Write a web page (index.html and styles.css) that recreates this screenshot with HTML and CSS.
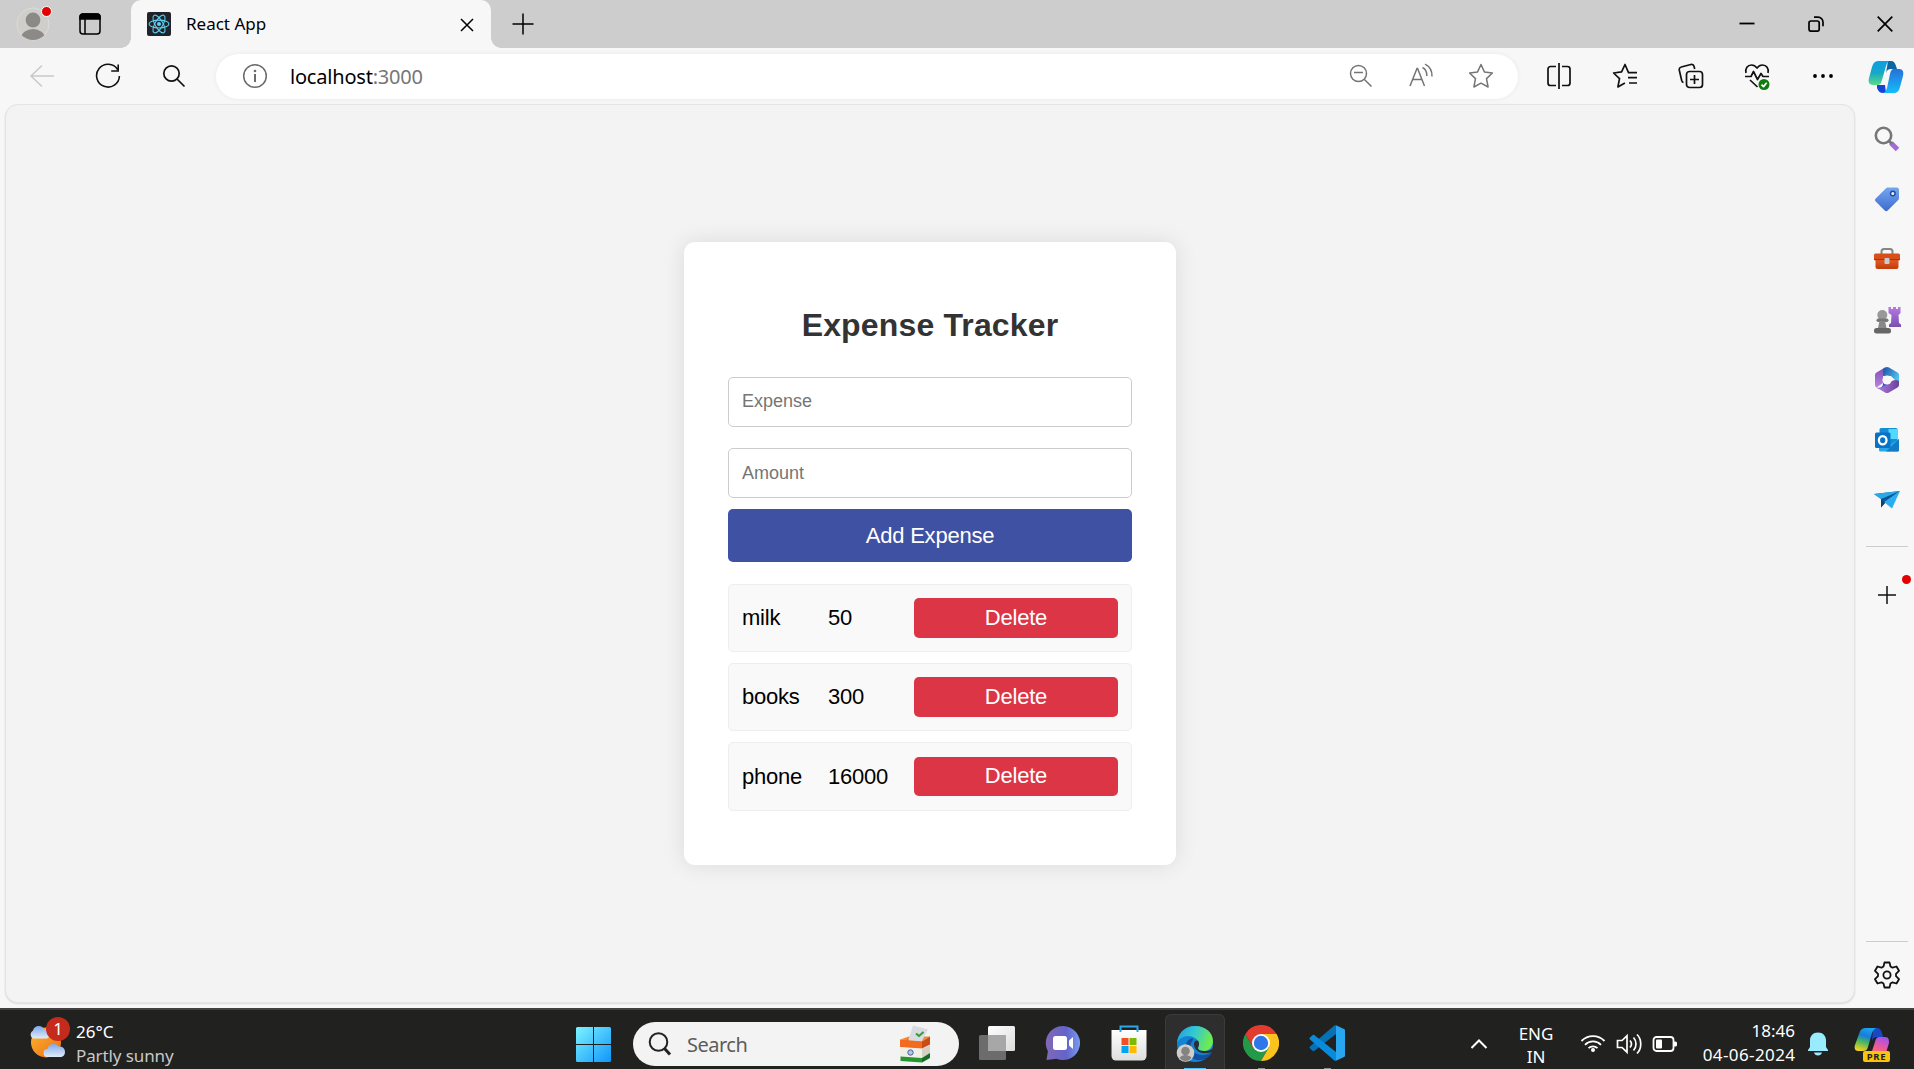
FILE: index.html
```html
<!DOCTYPE html>
<html lang="en">
<head>
<meta charset="utf-8">
<title>React App</title>
<link rel="stylesheet" href="styles.css">
</head>
<body>
<div class="desktop">
  <header class="tabstrip">
    <div class="profile">
      <svg width="34" height="34" viewBox="0 0 34 34"><defs><clipPath id="av"><circle cx="17" cy="17" r="16"/></clipPath></defs><circle cx="17" cy="17" r="16" fill="#cfcecb" stroke="#dddcd9"/><g clip-path="url(#av)" fill="#8c8a87"><circle cx="17" cy="13" r="7.4"/><ellipse cx="17" cy="31" rx="12" ry="9"/></g></svg>
      <span class="dot profile-dot"></span>
    </div>
    <svg class="workspace" width="22" height="22" viewBox="0 0 22 22" fill="none" stroke="#000" stroke-width="1.5"><rect x="1" y="1" width="20" height="20" rx="3"/><path d="M1 4a3 3 0 0 1 3-3h14a3 3 0 0 1 3 3v2H1z" fill="#000"/><path d="M6 6v15"/></svg>
    <div class="tab">
      <svg width="24" height="24" viewBox="0 0 24 24"><rect width="24" height="24" rx="2" fill="#20232a"/><g fill="none" stroke="#5ed3f3" stroke-width="1.05"><ellipse cx="12" cy="12" rx="10" ry="3.9"/><ellipse cx="12" cy="12" rx="10" ry="3.9" transform="rotate(60 12 12)"/><ellipse cx="12" cy="12" rx="10" ry="3.9" transform="rotate(120 12 12)"/></g><circle cx="12" cy="12" r="2" fill="#5ed3f3"/></svg>
      <span class="tab-title">React App</span>
      <svg class="tab-close" width="14" height="14" viewBox="0 0 14 14" stroke="#000" stroke-width="1.5"><path d="M1 1l12 12M13 1L1 13"/></svg>
    </div>
    <svg class="newtab" width="22" height="22" viewBox="0 0 22 22" stroke="#000" stroke-width="1.5"><path d="M11 .5v21M.5 11h21"/></svg>
    <div class="window-buttons">
      <svg width="16" height="16" viewBox="0 0 16 16" stroke="#000" stroke-width="1.8"><path d="M.5 7.5h15"/></svg>
      <svg width="16" height="16" viewBox="0 0 16 16" fill="none" stroke="#000" stroke-width="1.7"><rect x="1" y="5" width="10.2" height="10.2" rx="2"/><path d="M6 1.2h4a5 5 0 0 1 5 5v4"/></svg>
      <svg width="16" height="16" viewBox="0 0 16 16" stroke="#000" stroke-width="1.7"><path d="M.7.7l14.6 14.6M15.3.7L.7 15.3"/></svg>
    </div>
  </header>

  <nav class="toolbar">
    <div class="cell"><svg width="26" height="26" viewBox="0 0 26 26" fill="none" stroke="#c9c9c9" stroke-width="1.5"><path d="M25 13H2M13 2.5L2 13l11 10.5"/></svg></div>
    <div class="cell"><svg width="26" height="26" viewBox="0 0 26 26" fill="none" stroke="#111" stroke-width="1.6"><path d="M22.600 6.500A11.400 11.400 0 1 0 24.400 13M23.200 1.500V8h-7"/></svg></div>
    <div class="cell"><svg width="24" height="24" viewBox="0 0 24 24" fill="none" stroke="#111" stroke-width="1.7"><circle cx="9.5" cy="9.5" r="7.7"/><path d="M15 15l7.5 7.5"/></svg></div>
    <div class="address">
      <svg class="info" width="26" height="26" viewBox="0 0 26 26" fill="none" stroke="#6b6b6b" stroke-width="1.5"><circle cx="13" cy="13" r="11.3"/><path d="M13 11v8" stroke-width="2"/><circle cx="13" cy="8" r="1.3" fill="#6b6b6b" stroke="none"/></svg>
      <span class="url">localhost<span class="port">:3000</span></span>
      <div class="address-icons">
        <svg width="24" height="24" viewBox="0 0 24 24" fill="none" stroke="#757575" stroke-width="1.5"><circle cx="9.5" cy="9.5" r="8"/><path d="M15.2 15.2l7.3 7.3M5 8.500h9"/></svg>
        <svg width="26" height="26" viewBox="0 0 26 26" fill="none" stroke="#757575" stroke-width="1.5"><path d="M2 23L9 5.5h.6L16.5 23M4.6 16.5H14M14.5 4.500c3 1.500 4.500 4.500 4.300 8.500M17 1.200c5 2.500 7.200 6.500 7 12.300"/></svg>
        <svg width="26" height="26" viewBox="0 0 26 26" fill="none" stroke="#757575" stroke-width="1.5" stroke-linejoin="round"><path d="M13 1.500l3.400 7.400 8 1.100-5.900 5.600 1.600 8.400-7.100-3.900-7.100 3.900 1.600-8.400L1.600 10l8-1.100z"/></svg>
      </div>
    </div>
    <div class="tools">
      <div class="cell"><svg width="26" height="26" viewBox="0 0 26 26" fill="none" stroke="#111" stroke-width="1.7"><path d="M13 0v26M10 3.500H4.500A2.500 2.500 0 0 0 2 6v14A2.500 2.500 0 0 0 4.500 22.500H10M16 3.500h5.500A2.500 2.500 0 0 1 24 6v14a2.500 2.500 0 0 1-2.500 2.500H16"/></svg></div>
      <div class="cell"><svg width="26" height="26" viewBox="0 0 26 26" fill="none" stroke="#111" stroke-width="1.700" stroke-linejoin="round"><path d="M25 9.600h-8.500L13 1.500 9.600 8.900l-8 1.100 5.900 5.600-1.600 8.400 7-3.900M16 14.700h9M17 20h8"/></svg></div>
      <div class="cell"><svg width="26" height="26" viewBox="0 0 26 26" fill="none" stroke="#111" stroke-width="1.700"><rect x="8.500" y="8.500" width="16" height="16" rx="3"/><path d="M16.500 12v9M12 16.500h9M5.500 19.500c-1-.3-1.500-1-1.800-2L1.300 7.200c-.3-1.500.5-2.800 2-3.200l9.500-2.500c1.600-.4 2.900.4 3.300 2l.6 2.500"/></svg></div>
      <div class="cell"><svg width="26" height="28" viewBox="0 0 26 28" fill="none" stroke="#111" stroke-width="1.700" stroke-linejoin="round"><path d="M2 11C1 6.500 3.500 3 7.500 3c2.500 0 4.300 1.400 5.500 3 1.200-1.600 3-3 5.500-3 4 0 6.500 3.500 5.500 8M1 14.500h6l2.500-5 4 8 3.500-6 2 3h6M6 18l7.500 7"/><circle cx="20" cy="22.500" r="5.500" fill="#107c10" stroke="none"/><path d="M17.500 22.700l2 1.900 3.200-3.800" stroke="#fff"/></svg></div>
      <div class="cell"><svg width="22" height="6" viewBox="0 0 22 6"><circle cx="3" cy="3" r="1.900"/><circle cx="11" cy="3" r="1.900"/><circle cx="19" cy="3" r="1.900"/></svg></div>
      <div class="cell copilot"><svg width="36" height="34" viewBox="0 0 36 34"><defs><linearGradient id="c1" x1="0" y1="0" x2="0" y2="1"><stop offset="0" stop-color="#0a9fe5"/><stop offset=".5" stop-color="#19a7c7"/><stop offset="1" stop-color="#57dd86"/></linearGradient><linearGradient id="c2" x1="0" y1="0" x2="0" y2="1"><stop offset="0" stop-color="#2870d8"/><stop offset="1" stop-color="#12bdfb"/></linearGradient></defs><path d="M20 1h3c3 0 4 2 5 5l1 3h-6c-3 0-4 1-5 4z" fill="#0c65a3"/><path d="M9 25h8l1 8h-3c-3 0-5-2-6-5z" fill="#1743d6"/><path d="M10 1h12c-2 0-3 2-4 5l-4 14c-1 4-2 5-5 5H5c-4 0-5-3-4-7L4 7c1-4 3-6 6-6z" fill="url(#c1)"/><path d="M26 9h5c4 0 5 3 4 7l-3 11c-1 4-3 6-6 6H14c3 0 4-2 5-5l3-14c1-4 2-5 4-5z" fill="url(#c2)"/></svg></div>
    </div>
  </nav>

  <div class="browser-body">
    <main class="viewport">
      <section class="card">
        <h1>Expense Tracker</h1>
        <input class="field" type="text" placeholder="Expense">
        <input class="field amount" type="text" placeholder="Amount">
        <button class="add">Add Expense</button>
        <ul class="expenses">
          <li><span>milk</span><span>50</span><button class="delete">Delete</button></li>
          <li><span>books</span><span>300</span><button class="delete">Delete</button></li>
          <li><span>phone</span><span>16000</span><button class="delete">Delete</button></li>
        </ul>
      </section>
    </main>
    <aside class="sidebar">
      <div class="side-item"><svg width="26" height="26" viewBox="0 0 26 26"><path d="M17 17l6.500 6.500" stroke="#a46bd8" stroke-width="5"/><path d="M15 15l3 3" stroke="#777" stroke-width="3"/><circle cx="9.500" cy="9.500" r="7.700" fill="#f8f8f8" stroke="#777" stroke-width="2.600"/></svg></div>
      <div class="side-item"><svg width="26" height="26" viewBox="0 0 26 26"><defs><linearGradient id="tg" x1="0" y1="0" x2="0" y2="1"><stop stop-color="#75a7ef"/><stop offset="1" stop-color="#3e6bd0"/></linearGradient></defs><path d="M14 1.500h8.500a2.500 2.500 0 0 1 2.500 2.500v8c0 1-.3 1.600-1 2.300L13.700 24.500c-1 1-2 1-3 0L1.700 15.600c-1-1-1-2 0-3L11.800 2.400c.7-.7 1.200-.9 2.200-.9z" fill="url(#tg)"/><circle cx="18.800" cy="7.500" r="2.300" fill="#e8f0ff" stroke="#254a9f" stroke-width="1.500"/></svg></div>
      <div class="side-item"><svg width="28" height="24" viewBox="0 0 28 24"><defs><linearGradient id="tb" x1="0" y1="0" x2="0" y2="1"><stop stop-color="#e8622c"/><stop offset="1" stop-color="#c13c0a"/></linearGradient></defs><path d="M8.500 8V4.500A2.500 2.500 0 0 1 11 2h6a2.500 2.500 0 0 1 2.500 2.500V8" fill="none" stroke="#858585" stroke-width="2"/><path d="M2.500 11h23v9a2 2 0 0 1-2 2h-19a2 2 0 0 1-2-2z" fill="url(#tb)"/><rect x="1" y="6.500" width="26" height="7" rx="1.500" fill="#d94f18"/><path d="M1 12.500h26" stroke="#a9360c"/><rect x="11.500" y="11" width="5" height="6" rx="1" fill="#c5ccd2"/></svg></div>
      <div class="side-item"><svg width="28" height="28" viewBox="0 0 28 28"><defs><linearGradient id="rk" x1="0" y1="0" x2="0" y2="1"><stop stop-color="#b77ae4"/><stop offset="1" stop-color="#7a4faf"/></linearGradient></defs><path d="M15.500 1h2.500v2h2V1h3v2h2V1h2.500v6l-2 2 .5 8 2 1.500V21h-12v-2.500L18 17l.5-8-3-2z" fill="url(#rk)"/><circle cx="9.300" cy="9" r="5" fill="#999"/><rect x="3.500" y="12.500" width="12" height="3.500" rx="1.700" fill="#777"/><path d="M6.500 15h5.500l1.500 7H5z" fill="#888"/><rect x="1" y="22" width="17" height="5.500" rx="2.500" fill="#666"/></svg></div>
      <div class="side-item"><svg width="26" height="28" viewBox="0 0 26 28"><defs><linearGradient id="m1" x1="0" y1="0" x2="0" y2="1"><stop stop-color="#7b4fb8"/><stop offset="1" stop-color="#bb83df"/></linearGradient><linearGradient id="m2" x1="0" y1="0" x2="1" y2=".6"><stop stop-color="#1d4da5"/><stop offset="1" stop-color="#52c5ef"/></linearGradient><linearGradient id="m3" x1="0" y1="0" x2="1" y2="0"><stop stop-color="#b57ddd"/><stop offset="1" stop-color="#69429c"/></linearGradient></defs><path d="M11 1.500L2.500 6.500A3 3 0 0 0 1 9v10a3 3 0 0 0 1.500 2.500L9 17V10z" fill="url(#m1)"/><path d="M11 1.500a4 4 0 0 1 4 0l8.500 5A3 3 0 0 1 25 9v9L17 10 9 10V5c0-2 .5-2.700 2-3.500z" fill="url(#m2)"/><path d="M9 16v2c0 3-3 5-6.500 3.500L4 22.500c3 1 6 0 8-1.500l3-2z" fill="#385ac9"/><path d="M25 15v4a3 3 0 0 1-1.500 2.500l-8.500 5a4 4 0 0 1-4 0l-8.500-5C7 22 9 21 11 19.500l7-4.500c2-1.200 5-1.500 7 0z" fill="url(#m3)"/><circle cx="13" cy="14" r="4.600" fill="#f8f8f8"/></svg></div>
      <div class="side-item"><svg width="26" height="26" viewBox="0 0 26 26"><rect x="5.500" y="1" width="18" height="20" rx="1.500" fill="#168bd6"/><path d="M14.500 2H23v10h-8.500z" fill="#50d9ff"/><path d="M5 12l10 6 10-6v11a1.500 1.500 0 0 1-1.500 1.500h-17A1.500 1.500 0 0 1 5 23z" fill="#28a8ea"/><path d="M25 12L12 24.500h11.500A1.500 1.500 0 0 0 25 23z" fill="#127bc6"/><rect x="1" y="5.500" width="15.500" height="15.500" rx="1.500" fill="#0872c7"/><ellipse cx="8.700" cy="13.200" rx="3.800" ry="4.100" fill="none" stroke="#fff" stroke-width="2.300"/></svg></div>
      <div class="side-item"><svg width="28" height="20" viewBox="0 0 28 20"><path d="M1 4l7 5v8.500l4-4.500L27 1z" fill="#0b5597"/><path d="M1 4l7 5L27 1z" fill="#2ca9e8"/><path d="M11 12L27 1l-8 17.500z" fill="#2aaeef"/><path d="M8 9v8.500l4-4.500z" fill="#104272"/></svg></div>
      <hr class="rule">
      <div class="side-add">
        <svg width="20" height="20" viewBox="0 0 20 20" stroke="#111" stroke-width="1.500"><path d="M10 1v18M1 10h18"/></svg>
        <span class="dot add-dot"></span>
      </div>
      <hr class="rule rule-bottom">
      <div class="side-gear"><svg width="26" height="28" viewBox="0 0 26 28" fill="none" stroke="#111" stroke-width="1.800" stroke-linejoin="round"><path d="M10.500 1.500h5l1 4 2 1.200 4-1.200 2.500 4.300-3 3v2.400l3 3-2.500 4.300-4-1.200-2 1.200-1 4h-5l-1-4-2-1.200-4 1.200L1 18.200l3-3v-2.400l-3-3 2.500-4.300 4 1.200 2-1.200z"/><circle cx="13" cy="14" r="3.600"/></svg></div>
    </aside>
  </div>

  <footer class="taskbar">
    <div class="weather">
      <div class="weather-icon">
        <svg width="38" height="36" viewBox="0 0 38 36"><defs><linearGradient id="sun" x1="0" y1="0" x2="1" y2="1"><stop stop-color="#fcb832"/><stop offset="1" stop-color="#ee6b10"/></linearGradient><linearGradient id="cl" x1="0" y1="0" x2="0" y2="1"><stop stop-color="#7fa8ea"/><stop offset="1" stop-color="#e1ebfa"/></linearGradient></defs><circle cx="18" cy="18.500" r="15" fill="url(#sun)"/><path d="M5 14.500a4.500 4.500 0 0 1 0-8 6 6 0 0 1 11-1.500c4 0 6 3 5.500 6 0 2-1 3.500-3.500 3.500z" fill="url(#cl)"/><path d="M19.500 33a4 4 0 0 1 0-8 6 6 0 0 1 11-2.500c4.500-.5 6.500 2.500 6.500 5.500s-2 5-5 5z" fill="url(#cl)"/></svg>
        <span class="badge">1</span>
      </div>
      <div class="weather-text"><span>26°C</span><span class="muted">Partly sunny</span></div>
    </div>

    <div class="apps">
      <svg class="start" width="36" height="36" viewBox="0 0 36 36"><defs><linearGradient id="w" x1="0" y1="0" x2="36" y2="36" gradientUnits="userSpaceOnUse"><stop stop-color="#7df3ff"/><stop offset="1" stop-color="#0c93fb"/></linearGradient></defs><path fill="url(#w)" d="M1.500 0H17v17H0V1.500A1.500 1.500 0 0 1 1.500 0zM18 0h15.500A1.500 1.500 0 0 1 35 1.500V17H18zM0 18h17v17H1.500A1.500 1.500 0 0 1 0 33.500zM18 18h17v15.500a1.500 1.500 0 0 1-1.500 1.500H18z"/></svg>
      <div class="search">
        <svg width="24" height="24" viewBox="0 0 24 24" fill="none" stroke="#222" stroke-width="2"><circle cx="10.500" cy="10" r="8.800"/><path d="M16.500 16.500l5.500 6" stroke-width="3"/></svg>
        <span class="search-label">Search</span>
        <svg class="ballot" width="32" height="38" viewBox="0 0 32 38"><path d="M1 14.500l9-3h21l-8 5z" fill="#f58634"/><path d="M8 15.500h15" stroke="#8a3a10" stroke-width="1.500"/><path d="M14 .5L29 4.500 23 16H9z" fill="#d9dae2"/><path d="M17 8.500l3 2.500 4.500-4" fill="none" stroke="#2ca12c" stroke-width="2"/><path d="M1 14.500l22 2v7L1 22z" fill="#f26b1e"/><path d="M23 16.500l8-5v8l-8 4z" fill="#c94c14"/><path d="M1.500 22.500L23 24v9l-21.500-1z" fill="#f1eee6"/><path d="M23 24l8-4v9l-8 4z" fill="#d4d1c4"/><path d="M1.500 31.500L23 33v4.500L1.500 36z" fill="#26962f"/><path d="M23 33l8-5v5l-8 4.500z" fill="#146d24"/><circle cx="11.500" cy="27.500" r="2.700" fill="#bac5df" stroke="#4b5d9c"/></svg>
      </div>
      <div class="app taskview"><svg width="38" height="36" viewBox="0 0 38 36"><defs><linearGradient id="tv" x1="0" y1="0" x2="1" y2="1"><stop stop-color="#fff"/><stop offset="1" stop-color="#dcdcdc"/></linearGradient></defs><rect x="10" y="1" width="27" height="25" rx="1.500" fill="url(#tv)"/><rect x="1" y="10" width="27" height="25" rx="1.500" fill="#6c6c6c"/><path d="M10 10h18v16H10z" fill="#a7a7a7"/></svg></div>
      <div class="app"><svg width="36" height="36" viewBox="0 0 36 36"><defs><linearGradient id="ch" x1="0" y1="0" x2="1" y2="0"><stop stop-color="#8368b4"/><stop offset=".6" stop-color="#6264cb"/><stop offset="1" stop-color="#789cf2"/></linearGradient></defs><path d="M18 1a17 17 0 1 1-6.500 32.700L1.500 35l1.400-8.800A17 17 0 0 1 18 1z" fill="url(#ch)"/><rect x="8" y="11" width="14" height="14" rx="2.500" fill="#fff"/><path d="M24 15.500l4-3.500v12l-4-3.500z" fill="#fff"/></svg></div>
      <div class="app"><svg width="36" height="36" viewBox="0 0 36 36"><defs><linearGradient id="st" x1="0" y1="0" x2="0" y2="1"><stop stop-color="#fff"/><stop offset="1" stop-color="#dedede"/></linearGradient></defs><path d="M.5 5h35v26a4.500 4.500 0 0 1-4.500 4.500H5A4.500 4.500 0 0 1 .5 31z" fill="url(#st)"/><path d="M9.500 7V1.500h17V7" fill="none" stroke="#29a8ea" stroke-width="2"/><path d="M10.500 13h7v7h-7z" fill="#f25022"/><path d="M18.500 13h7v7h-7z" fill="#7fba00"/><path d="M10.500 21h7v7h-7z" fill="#00a4ef"/><path d="M18.500 21h7v7h-7z" fill="#ffb900"/></svg></div>
      <div class="app active"><svg width="38" height="38" viewBox="0 0 38 38"><defs><linearGradient id="e1" x1="0" y1="0" x2="1" y2=".3"><stop stop-color="#209be0"/><stop offset=".5" stop-color="#32c7d5"/><stop offset="1" stop-color="#6eea52"/></linearGradient></defs><circle cx="19" cy="19" r="18" fill="#1384d5"/><path d="M1 18C2 8 9 1 19 1c11 0 18 7 18 15 0 6-4 10-9 10-4 0-6-1-6-3 0-1 1-2 1-4 0-4-5-8-11-8-5 0-9 3-11 7z" fill="url(#e1)"/><path d="M14 14c-5 3-6 10-2 15 4 6 12 8 19 4 2-1 4-3 5-6-6 4-15 4-19-1-3-4-3-8 0-11 1-1-1-2-3-1z" fill="#10509d"/><path d="M18 19c0 6 6 10 12 9 3 0 6-1 8.500-3v-4c-2 4-6 5-10.500 5-4 0-6-1-6-3 0-1 1-2 1-4 0-5-5-4-5 0z" fill="#2e2e2e"/><circle cx="9.500" cy="28" r="8.800" fill="#d0cecb"/><circle cx="9.500" cy="26" r="4.300" fill="#85827f"/><path d="M3.500 33c2-4 10-4 12 0-3 4-9 4-12 0z" fill="#85827f"/></svg></div>
      <div class="app running"><svg width="36" height="36" viewBox="0 0 36 36"><path d="M2.400 9A18 18 0 0 0 18 36l7.800-13.500L18 18l-7.800 4.500z" fill="#249a48"/><path d="M25.800 22.500L18 36A18 18 0 0 0 33.600 9H18z" fill="#fcc31e"/><path d="M10.200 22.500L2.400 9A18 18 0 0 1 33.600 9H18z" fill="#e33b2e"/><circle cx="18" cy="18" r="9" fill="#fff"/><circle cx="18" cy="18" r="7.200" fill="#2f77e9"/></svg></div>
      <div class="app running"><svg width="36" height="36" viewBox="0 0 36 36"><path d="M1 23.500l2.500 2.200c.7.600 1.300.6 2 0L27 9V.3c-.8-.3-1.500 0-2 .5L1 21.500c-.7.600-.7 1.400 0 2z" fill="#0871b3"/><path d="M1 12.500l2.500-2.200c.7-.6 1.300-.6 2 0L27 27v8.700c-.8.300-1.500 0-2-.5L1 14.500c-.7-.6-.7-1.400 0-2z" fill="#098bdb"/><path d="M27 .3l8 3.700c.6.300 1 .8 1 1.500v25c0 .7-.4 1.200-1 1.500l-8 3.700z" fill="#29a6f0"/></svg></div>
    </div>

    <div class="tray">
      <svg class="chevron" width="18" height="12" viewBox="0 0 18 12" fill="none" stroke="#fff" stroke-width="2"><path d="M1.500 10L9 2.500l7.500 7.500"/></svg>
      <div class="lang"><span>ENG</span><span>IN</span></div>
      <svg class="wifi" width="26" height="20" viewBox="0 0 26 20" fill="none" stroke="#fff" stroke-width="1.800"><path d="M1.500 8a16 16 0 0 1 23 0M5 11.800a11.200 11.200 0 0 1 16 0M8.500 15.200a6.500 6.500 0 0 1 9 0"/><circle cx="13" cy="17" r="2" fill="#fff" stroke="none"/></svg>
      <svg class="volume" width="26" height="22" viewBox="0 0 26 22" fill="none" stroke="#fff" stroke-width="1.700"><path d="M1.500 7.500H6l5-4.700v16.400l-5-4.700H1.500zM14 7.500c1.700 2 1.700 5 0 7M17.500 4.500c3.300 3.500 3.300 9.500 0 13M21 1.500c5 5 5 14 0 19"/></svg>
      <svg class="battery" width="26" height="18" viewBox="0 0 26 18"><rect x="1.500" y="2" width="20" height="14" rx="3" fill="none" stroke="#fff" stroke-width="1.800"/><rect x="4" y="4.500" width="6" height="9" rx="1" fill="#fff"/><path d="M22 6.500h1.500a1.500 1.500 0 0 1 1.500 1.500v2a1.500 1.500 0 0 1-1.500 1.500H22z" fill="#fff"/></svg>
      <div class="clock"><span>18:46</span><span class="date">04-06-2024</span></div>
      <svg class="bell" width="22" height="24" viewBox="0 0 22 24" fill="#99ebff"><path d="M11 .5c5 0 8 3.500 8 8V15l2 3v1H1v-1l2-3V8.500c0-4.500 3-8 8-8zM7 20.500h8c-.5 2-2 3-4 3s-3.500-1-4-3z"/></svg>
      <div class="pre">
        <svg width="36" height="30" viewBox="0 0 36 30"><defs><linearGradient id="p1" x1=".6" y1="0" x2=".3" y2="1"><stop stop-color="#1ca4ee"/><stop offset=".35" stop-color="#177cd8"/><stop offset=".6" stop-color="#43b564"/><stop offset="1" stop-color="#f7d11e"/></linearGradient><linearGradient id="p2" x1=".7" y1="0" x2=".3" y2="1"><stop stop-color="#a452ed"/><stop offset=".5" stop-color="#ec5a9b"/><stop offset="1" stop-color="#fb7a4a"/></linearGradient></defs><path d="M19 1h4c3 0 4 2 5 5l1 4h-6c-3 0-4 1-5 4z" fill="#1848c4"/><path d="M11 1h12c-2 0-4 2-5 5l-4 14c-1 3-2 4-5 4H4c-3 0-4-3-3-6L5 7c1-4 3-6 6-6z" fill="url(#p1)"/><path d="M26 10h5c4 0 4 3 4 6l-4 13H12c4 0 5-2 6-5l3-9c1-4 2-5 5-5z" fill="url(#p2)"/></svg>
        <span class="pre-label">PRE</span>
      </div>
    </div>
  </footer>
</div>
</body>
</html>
```
FILE: styles.css
```css
* { box-sizing: border-box; }
body { margin: 0; overflow: hidden; font-family: "Noto Sans", "Open Sans", sans-serif; color: #000; }
svg { display: block; flex: none; }
.desktop { width: 1914px; height: 1069px; display: flex; flex-direction: column; background: #f7f7f7; }
.dot { position: absolute; width: 9px; height: 9px; border-radius: 50%; background: #e30000; }

/* Tab strip */
.tabstrip { height: 48px; flex: none; display: flex; align-items: center; background: #cdcdcd; }
.profile { position: relative; margin-left: 16px; }
.profile-dot { left: 25px; top: -1px; width: 11px; height: 11px; border: 1px solid #fff; }
.workspace { margin-left: 29px; }
.tab { position: relative; margin-left: 30px; width: 360px; height: 48px; padding: 0 17px 0 16px; display: flex; align-items: center; background: #f7f7f7; border-radius: 10px 10px 0 0; }
.tab::before, .tab::after { content: ""; position: absolute; bottom: 0; width: 10px; height: 10px; }
.tab::before { left: -10px; background: radial-gradient(circle at 0 0, transparent 9.5px, #f7f7f7 10px); }
.tab::after { right: -10px; background: radial-gradient(circle at 100% 0, transparent 9.5px, #f7f7f7 10px); }
.tab-title { margin-left: 15px; padding-bottom: 2px; font-size: 17px; }
.tab-close { margin-left: auto; margin-top: 2px; }
.newtab { margin: 0 0 1px 21px; }
.window-buttons { margin: 0 21px 1px auto; display: flex; gap: 53px; }

/* Toolbar */
.toolbar { height: 56px; flex: none; display: flex; align-items: center; padding-left: 9px; }
.cell { width: 66px; flex: none; display: flex; justify-content: center; }
.address { width: 1302px; flex: none; height: 45px; margin-left: 9px; display: flex; align-items: center; background: #fff; border-radius: 23px; padding: 0 7px 0 26px; box-shadow: 0 0 5px rgba(0,0,0,.06); }
.url { margin-left: 22px; font-size: 20px; letter-spacing: -.2px; }
.port { color: #767676; }
.address-icons { margin-left: auto; display: grid; grid-template-columns: repeat(3, 60px); place-items: center; }
.tools { flex: none; display: flex; align-items: center; margin-left: 8px; }
.copilot { width: 60px; padding-top: 2px; }

/* Page and sidebar */
.browser-body { height: 904px; flex: none; display: flex; padding-left: 5px; }
.viewport { width: 1850px; height: 899px; border: 1px solid #e4e4e4; border-radius: 13px; background: #f3f3f3; box-shadow: 0 1px 2px rgba(0,0,0,.12); display: flex; justify-content: center; align-items: flex-start; padding-top: 137px; }
.card { width: 492px; height: 623px; padding: 64px 44px 0; background: #fff; border-radius: 11px; box-shadow: 0 0 22px rgba(0,0,0,.1); font-family: "Liberation Sans", Arial, sans-serif; display: flex; flex-direction: column; }
.card h1 { margin: 0 0 51px; height: 20px; line-height: 38px; text-align: center; font-size: 32px; letter-spacing: .15px; color: #333; }
.field { height: 50px; margin: 0 0 21px; padding: 0 13px 2px; border: 1px solid #ccc; border-radius: 5px; font: 18px "Liberation Sans", Arial, sans-serif; }
.amount { padding-bottom: 0; }
.field::placeholder { color: #757575; }
.add, .delete { border: 0; border-radius: 5px; color: #fff; font: 22px "Liberation Sans", Arial, sans-serif; letter-spacing: -.22px; padding: 0; }
.add { height: 53px; margin-top: -10px; background: #3f51a3; }
.expenses { list-style: none; margin: 22px 0 0; padding: 0; display: flex; flex-direction: column; gap: 11px; font-size: 22px; letter-spacing: -.22px; }
.expenses li { height: 68px; padding: 0 13px; display: grid; grid-template-columns: 86px 86px 204px; align-items: center; border: 1px solid #eee; border-radius: 5px; background: #f9f9f9; }
.expenses li:last-child { height: 69px; }
.expenses span { padding-bottom: 0; }
.delete { height: 40px; background: #dc3545; padding-bottom: 1px; }
.expenses li:last-child .delete { height: 39px; }
.sidebar { width: 59px; height: 904px; padding: 5px 0 0 4px; display: flex; flex-direction: column; align-items: center; }
.side-item { height: 60.2px; display: flex; align-items: center; padding-left: 1px; }
.side-item:first-child { padding-left: 0; }
.rule { width: 42px; border: 0; border-top: 1px solid #ccc; margin: 16px 0 0; }
.side-add { position: relative; margin-top: 38px; }
.add-dot { left: 25px; top: -10px; }
.rule-bottom { margin-top: 336px; }
.side-gear { margin-top: 19px; }

/* Taskbar */
.taskbar { height: 61px; flex: none; display: flex; background: #212120; border-top: 2px solid #424242; color: #fff; font-size: 17px; }
.weather { width: 576px; padding: 14px 0 0 28px; display: flex; align-items: flex-start; }
.weather-icon { position: relative; }
.badge { position: absolute; left: 18px; top: -7px; width: 24px; height: 24px; border-radius: 50%; background: #c42b1c; text-align: center; line-height: 23px; font-size: 17px; }
.weather-text, .lang, .clock { display: flex; flex-direction: column; line-height: 24px; }
.weather-text { margin: -4px 0 0 10px; }
.muted { color: #c9c9c9; letter-spacing: -.1px; }
.apps { width: 860px; display: flex; align-items: flex-start; }
.start { margin-top: 17px; }
.search { width: 326px; height: 44px; margin: 12px 5px 0 21px; padding: 0 28px 0 15px; display: flex; align-items: center; background: #f3f3f3; border-radius: 22px; }
.search-label { margin-left: 15px; color: #5c5c5c; font-size: 20px; letter-spacing: -.5px; }
.ballot { margin-left: auto; }
.app { position: relative; width: 60px; height: 55px; margin: 4px 3px 0; padding: 7px 0 4px; border-radius: 6px 6px 0 0; display: flex; align-items: center; justify-content: center; }
.active { background: #2e2e2e; border: 1px solid #3b3b3b; border-bottom: 0; }
.active::after, .running::after { content: ""; position: absolute; bottom: 0; height: 1px; width: 7px; background: #8e8e8e; }
.active::after { width: 22px; background: #4cc2ff; }
.tray { position: relative; width: 478px; display: flex; align-items: flex-start; }
.chevron { margin: 28px 0 0 34px; }
.lang { width: 50px; margin: 12px 0 0 23px; align-items: center; line-height: 23px; }
.wifi { margin: 23px 0 0 19px; }
.volume { margin: 23px 0 0 10px; }
.battery { margin: 25px 0 0 10px; }
.clock { width: 117px; margin-top: 9px; align-items: flex-end; line-height: 24px; }
.date { letter-spacing: .4px; margin-right: -.4px; }
.bell { margin: 22px 0 0 12px; }
.pre { position: relative; margin: 17px 0 0 25px; }
.pre-label { position: absolute; left: 9px; top: 24px; width: 27px; height: 11px; background: #fcc30b; color: #222; border-radius: 2px; text-align: center; font-size: 9.5px; font-weight: 700; line-height: 11px; letter-spacing: .7px; }
```
